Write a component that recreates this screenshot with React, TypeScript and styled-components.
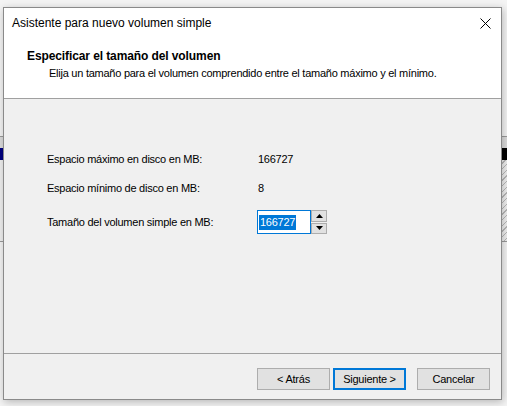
import React from "react";
import styled, { createGlobalStyle } from "styled-components";

const GlobalStyle = createGlobalStyle`
  html, body {
    margin: 0;
    padding: 0;
  }
  body {
    width: 507px;
    height: 406px;
    overflow: hidden;
    background: #f4f4f4;
    font-family: "Liberation Sans", Arial, sans-serif;
    font-size: 11px;
    letter-spacing: -0.25px;
    color: #000;
  }
`;

const Desktop = styled.div`
  position: relative;
  width: 507px;
  height: 406px;
  padding: 7px 0 0 3px;
  box-sizing: border-box;
`;

// bits of the window lying behind the dialog
const BehindStrip = styled.div<{ $side: "left" | "right" }>`
  position: absolute;
  top: 136px;
  ${(p) => (p.$side === "left" ? "left: 0; width: 3px;" : "right: 0; width: 6px;")}
  height: 104px;
  border-top: 1px solid #9a9a9a;
  border-bottom: 1px solid #9a9a9a;
  background: ${(p) =>
    p.$side === "left"
      ? "linear-gradient(to bottom, #dcdcdc 0 11px, #000080 11px 23px, #f0f0f0 23px)"
      : "linear-gradient(to bottom, #dcdcdc 0 11px, #000 11px 23px, transparent 23px), repeating-linear-gradient(135deg, #f0f0f0 0 3px, #b8b8b8 3px 4px)"};
`;

const Window = styled.div`
  position: relative;
  z-index: 1;
  width: 499px;
  height: 393px;
  box-sizing: border-box;
  border: 1px solid #8a8a8a;
  background: #f0f0f0;
  display: flex;
  flex-direction: column;
  box-shadow: 1px 2px 8px rgba(0, 0, 0, 0.25);
`;

const TitleBar = styled.div`
  height: 30px;
  background: #fff;
  display: flex;
  align-items: center;
  justify-content: space-between;
  padding: 0 8px 2px 8px;
`;

const Title = styled.span`
  font-size: 12px;
  letter-spacing: 0;
  line-height: 15px;
`;

const CloseButton = styled.div`
  width: 20px;
  height: 20px;
  display: flex;
  align-items: center;
  justify-content: center;
  margin-right: -2px;
`;

const Header = styled.div`
  background: #fff;
  height: 59px;
  border-bottom: 1px solid #a0a0a0;
  padding: 9px 0 0 23px;
  box-sizing: border-box;
  display: flex;
  flex-direction: column;
  gap: 2px;
`;

const Heading = styled.div`
  font-size: 12px;
  letter-spacing: -0.1px;
  font-weight: bold;
  line-height: 15px;
`;

const Subheading = styled.div`
  line-height: 15px;
  padding-left: 22px;
`;

const Body = styled.div`
  flex: 1;
  padding: 53px 0 0 43px;
  display: grid;
  grid-template-columns: 211px auto;
  grid-template-rows: 15px 15px 24px;
  row-gap: 14px;
  align-content: start;
  align-items: center;
`;

const Label = styled.div`
  line-height: 15px;
`;

const Value = styled.div`
  line-height: 15px;
`;

const SpinBox = styled.div`
  display: flex;
  align-items: stretch;
  height: 24px;
  margin-left: -1px;
`;

const SpinInput = styled.div`
  width: 54px;
  box-sizing: border-box;
  border: 1px solid #0078d7;
  background: #fff;
  display: flex;
  align-items: center;
  padding-left: 1px;
`;

const Selected = styled.span`
  background: #0078d7;
  color: #fff;
  line-height: 15px;
  padding: 0 1px;
`;

const SpinButtons = styled.div`
  width: 16px;
  display: flex;
  flex-direction: column;
  gap: 1px;
`;

const SpinButton = styled.div`
  flex: 1;
  border: 1px solid #adadad;
  background: #e1e1e1;
  display: flex;
  align-items: center;
  justify-content: center;
`;

const Footer = styled.div`
  height: 46px;
  border-top: 1px solid #a0a0a0;
  box-sizing: border-box;
  display: flex;
  justify-content: flex-end;
  align-items: flex-start;
  padding: 14px 11px 0 0;
`;

const Button = styled.div<{ $default?: boolean; $gap?: number }>`
  width: 73px;
  height: 22px;
  box-sizing: border-box;
  border: 1px solid ${(p) => (p.$default ? "#0078d7" : "#adadad")};
  box-shadow: ${(p) => (p.$default ? "inset 0 0 0 1px #0078d7" : "none")};
  background: #e1e1e1;
  display: flex;
  align-items: center;
  justify-content: center;
  margin-left: ${(p) => p.$gap ?? 0}px;
  line-height: 15px;
`;

const Arrow = ({ up }: { up?: boolean }) => (
  <svg width="7" height="4" viewBox="0 0 7 4">
    <path d={up ? "M0 4 L3.5 0 L7 4 Z" : "M0 0 L3.5 4 L7 0 Z"} fill="#000" />
  </svg>
);

export default function App() {
  return (
    <>
      <GlobalStyle />
      <Desktop>
        <BehindStrip $side="left" />
        <BehindStrip $side="right" />
        <Window>
          <TitleBar>
            <Title>Asistente para nuevo volumen simple</Title>
            <CloseButton>
              <svg width="11" height="11" viewBox="0 0 11 11">
                <path d="M0.5 0.5 L10.5 10.5 M10.5 0.5 L0.5 10.5" stroke="#000" strokeWidth="1" />
              </svg>
            </CloseButton>
          </TitleBar>
          <Header>
            <Heading>Especificar el tamaño del volumen</Heading>
            <Subheading>
              Elija un tamaño para el volumen comprendido entre el tamaño máximo y el mínimo.
            </Subheading>
          </Header>
          <Body>
            <Label>Espacio máximo en disco en MB:</Label>
            <Value>166727</Value>
            <Label>Espacio mínimo de disco en MB:</Label>
            <Value>8</Value>
            <Label>Tamaño del volumen simple en MB:</Label>
            <SpinBox>
              <SpinInput>
                <Selected>166727</Selected>
              </SpinInput>
              <SpinButtons>
                <SpinButton>
                  <Arrow up />
                </SpinButton>
                <SpinButton>
                  <Arrow />
                </SpinButton>
              </SpinButtons>
            </SpinBox>
          </Body>
          <Footer>
            <Button>&lt; Atrás</Button>
            <Button $default $gap={3}>Siguiente &gt;</Button>
            <Button $gap={11}>Cancelar</Button>
          </Footer>
        </Window>
      </Desktop>
    </>
  );
}
